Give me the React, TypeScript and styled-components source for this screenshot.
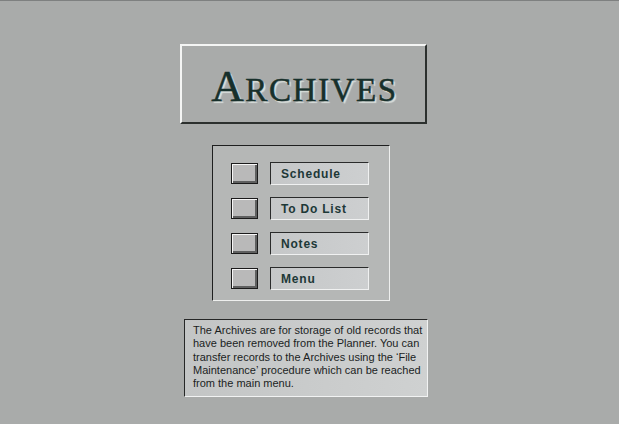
import React from "react";
import styled, { createGlobalStyle } from "styled-components";

const Global = createGlobalStyle`
  html, body {
    margin: 0;
    padding: 0;
    background: #a9abaa;
  }
  body {
    font-family: "Liberation Sans", Arial, sans-serif;
  }
`;

const Page = styled.div`
  width: 619px;
  height: 424px;
  box-sizing: border-box;
  border-top: 1px solid #7e8080;
  background: #a9abaa;
  padding: 43px 0 0 180px;
  display: flex;
  flex-direction: column;
  align-items: flex-start;
  overflow: hidden;
`;

const TitleBox = styled.div`
  width: 247px;
  height: 80px;
  box-sizing: border-box;
  border-top: 2px solid #f4f5f4;
  border-left: 2px solid #f4f5f4;
  border-bottom: 2px solid #2c302e;
  border-right: 2px solid #2c302e;
  display: flex;
  align-items: center;
  justify-content: center;
  padding: 4px 0 0 2px;
`;

const Title = styled.h1`
  margin: 0;
  font-family: "Liberation Serif", "Times New Roman", serif;
  font-weight: normal;
  color: #17302b;
  font-size: 33px;
  letter-spacing: 1.6px;
  line-height: 1;
  -webkit-text-stroke: 0.5px #17302b;
  text-shadow: 2px 2px 1px rgba(222, 228, 225, 0.9);
`;

const BigCap = styled.span`
  font-size: 45px;
`;

const Panel = styled.div`
  margin: 21px 0 0 32px;
  width: 178px;
  height: 156px;
  box-sizing: border-box;
  border-top: 1px solid #1e1f1f;
  border-left: 1px solid #1e1f1f;
  border-bottom: 1px solid #eeefee;
  border-right: 1px solid #eeefee;
  background: #b5b7b6;
  padding: 16px 0 0 18px;
  display: flex;
  flex-direction: column;
  gap: 12px;
`;

const Row = styled.div`
  display: flex;
  align-items: center;
  gap: 12px;
  height: 23px;
`;

const SquareButton = styled.button`
  width: 27px;
  height: 21px;
  box-sizing: border-box;
  padding: 0;
  border: 1px solid #1b1b1b;
  background: #b9b9b9;
  box-shadow: inset 1px 1px 0 #f6f6f6, inset -2px -2px 0 #5f6060;
  cursor: pointer;
`;

const Label = styled.div`
  width: 99px;
  height: 23px;
  box-sizing: border-box;
  border-top: 1px solid #2a2b2b;
  border-left: 1px solid #2a2b2b;
  border-bottom: 1px solid #f0f1f1;
  border-right: 1px solid #f0f1f1;
  background: linear-gradient(90deg, #c5c7c8, #cdcfd0);
  padding-left: 10px;
  display: flex;
  align-items: center;
  font-family: "Liberation Sans", Arial, sans-serif;
  font-weight: bold;
  font-size: 12px;
  letter-spacing: 0.8px;
  color: #1d3837;
`;

const Description = styled.div`
  margin: 18px 0 0 4px;
  width: 244px;
  height: 78px;
  box-sizing: border-box;
  border-top: 1px solid #262727;
  border-left: 1px solid #262727;
  border-bottom: 1px solid #f2f3f3;
  border-right: 1px solid #f2f3f3;
  background: linear-gradient(90deg, #c3c5c5, #cfd1d1);
  padding: 4px 0 0 8px;
  font-family: "Liberation Sans", Arial, sans-serif;
  font-size: 11px;
  line-height: 13.3px;
  color: #1b1e1e;
  white-space: nowrap;
`;

const items = ["Schedule", "To Do List", "Notes", "Menu"];

export default function App() {
  return (
    <>
      <Global />
      <Page>
        <TitleBox>
          <Title>
            <BigCap>A</BigCap>RCHIVES
          </Title>
        </TitleBox>
        <Panel>
          {items.map((item) => (
            <Row key={item}>
              <SquareButton aria-label={item} />
              <Label>{item}</Label>
            </Row>
          ))}
        </Panel>
        <Description>
          The Archives are for storage of old records that
          <br />
          have been removed from the Planner. You can
          <br />
          transfer records to the Archives using the ‘File
          <br />
          Maintenance’ procedure which can be reached
          <br />
          from the main menu.
        </Description>
      </Page>
    </>
  );
}
